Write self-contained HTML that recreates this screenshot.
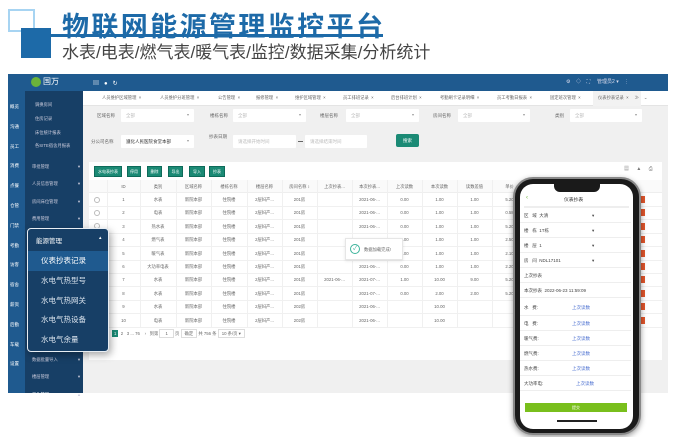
<!DOCTYPE html>
<html><head><meta charset="utf-8">
<style>
*{margin:0;padding:0;box-sizing:border-box}
body{width:681px;height:437px;background:#fff;position:relative;overflow:hidden;font-family:"Liberation Sans","Noto Sans CJK SC",sans-serif;color:#555}
.a{position:absolute;white-space:nowrap}
.t{font-size:4.5px;color:#666}
.inp{position:absolute;background:#fff;height:13px;font-size:4.5px;color:#bbb;padding:4px 5px;border-radius:1px}
.inp i{position:absolute;right:5px;top:3px;font-style:normal;color:#999;font-size:4px}
.btn{position:absolute;top:166px;height:11px;background:#1b8a75;border:1px solid #0e6b5a;color:#fff;font-size:4px;text-align:center;line-height:9px}
.pm{position:absolute;left:0;width:82px;height:19.5px;line-height:19.5px;padding-left:13px;color:#dbe4ee;font-size:7.5px}
.ph{font-size:4.5px;color:#444;position:absolute;left:0;width:111px;height:15px;border-bottom:1.5px solid #eee;padding:5px 4px}
.tab{position:absolute;top:95px;font-size:4.3px;color:#666}
</style></head><body>
<!-- logo -->
<div class="a" style="left:8px;top:9px;width:27px;height:23px;border:2.5px solid #a7d4f2"></div>
<div class="a" style="left:21px;top:28px;width:30px;height:30px;background:#1d6aa8"></div>
<div class="a" style="left:62px;top:5px;font-size:27px;font-weight:bold;color:#1d6aa8;letter-spacing:2.4px">物联网能源管理监控平台</div>
<div class="a" style="left:50px;top:34px;width:333px;height:3px;background:#1d6aa8"></div>
<div class="a" style="left:62px;top:38px;font-size:17px;color:#444">水表/电表/燃气表/暖气表/监控/数据采集/分析统计</div>

<!-- app -->
<div class="a" style="left:8px;top:74px;width:660px;height:319px;background:#f0f0f0"></div>
<div class="a" style="left:8px;top:74px;width:660px;height:17px;background:#1f5a8f"></div>
<div class="a" style="left:31px;top:77px;width:10px;height:10px;border-radius:50%;background:#6bb33a"></div>
<div class="a" style="left:43px;top:76px;font-size:8px;color:#fff">国万</div>
<div class="a" style="left:93px;top:78px;font-size:6px;color:#fff">▤ &nbsp; ● &nbsp; ↻</div>
<div class="a" style="left:566px;top:78px;font-size:5px;color:#dde">⚙ &nbsp;&nbsp; ◇ &nbsp;&nbsp; ⛶ &nbsp;&nbsp;&nbsp; 管理员2 ▾ &nbsp;&nbsp; ⋮</div>
<div class="a" style="left:8px;top:91px;width:17px;height:302px;background:#1f5a8f"></div>
<div class="a" style="left:25px;top:91px;width:58px;height:302px;background:#173f66"></div>
<div class="a" style="left:10px;top:97px;font-size:4.5px;color:#fff;line-height:19.8px;white-space:normal;width:14px">概览<br>沟通<br>员工<br>消费<br>点餐<br>仓管<br>门禁<br>考勤<br>访客<br>宿舍<br>薪资<br>后勤<br>车载<br>设置</div>
<div class="a" style="left:35px;top:98px;font-size:4.3px;color:#ccd;line-height:13.8px">调换房间<br>住房记录<br>床位统计报表<br>各SITE宿舍月报表</div>
<div class="a" style="left:32px;top:158px;font-size:4.3px;color:#ccd;line-height:17.4px;width:48px">审批管理<span style="float:right">▾</span><br>人员信息管理<span style="float:right">▾</span><br>房间床位管理<span style="float:right">▾</span><br>费用管理<span style="float:right">▾</span></div>
<div class="a" style="left:32px;top:351px;font-size:4.3px;color:#ccd;line-height:17.4px;width:48px">数据批量导入<span style="float:right">▾</span><br>楼层管理<span style="float:right">▾</span><br><span style="color:#fff">卫生管理</span><span style="float:right">▴</span></div>

<!-- tabs -->
<div class="a" style="left:83px;top:91px;width:585px;height:15px;background:#fff;border-bottom:1px solid #e4e4e4"></div>
<div class="tab" style="left:102px">人员维护区域管理 &nbsp;×</div>
<div class="tab" style="left:160px">人员维护分班管理 &nbsp;×</div>
<div class="tab" style="left:218px">公告管理 &nbsp;×</div>
<div class="tab" style="left:256px">报修管理 &nbsp;×</div>
<div class="tab" style="left:295px">维护区域管理 &nbsp;×</div>
<div class="tab" style="left:343px">员工排班记录 &nbsp;×</div>
<div class="tab" style="left:391px">后台排班计划 &nbsp;×</div>
<div class="tab" style="left:440px">考勤刷卡记录明细 &nbsp;×</div>
<div class="tab" style="left:497px">员工考勤日报表 &nbsp;×</div>
<div class="tab" style="left:550px">固定班次管理 &nbsp;×</div>
<div class="a" style="left:593px;top:91px;width:48px;height:15px;background:#f2f2f2"></div>
<div class="tab" style="left:598px">仪表抄表记录 &nbsp;× &nbsp;&nbsp;&nbsp; ≫ &nbsp;&nbsp; ⌄</div>

<!-- filters -->
<div class="a t" style="left:97px;top:113px">区域名称</div><div class="inp" style="left:121px;top:109px;width:73px">全部<i>▾</i></div>
<div class="a t" style="left:210px;top:113px">楼栋名称</div><div class="inp" style="left:233px;top:109px;width:73px">全部<i>▾</i></div>
<div class="a t" style="left:320px;top:113px">楼层名称</div><div class="inp" style="left:346px;top:109px;width:73px">全部<i>▾</i></div>
<div class="a t" style="left:433px;top:113px">房间名称</div><div class="inp" style="left:458px;top:109px;width:72px">全部<i>▾</i></div>
<div class="a t" style="left:555px;top:113px">类别</div><div class="inp" style="left:570px;top:109px;width:72px">全部<i>▾</i></div>
<div class="a t" style="left:91px;top:139px">分公司名称</div><div class="inp" style="left:121px;top:135px;width:73px;color:#333">遵化人民医院食堂本部<i>▾</i></div>
<div class="a t" style="left:209px;top:134px">抄表日期</div>
<div class="inp" style="left:233px;top:135px;width:63px">请选择开始时间</div>
<div class="a" style="left:298px;top:141px;width:5px;height:1px;background:#666"></div>
<div class="inp" style="left:305px;top:135px;width:62px">请选择结束时间</div>
<div class="a" style="left:396px;top:134px;width:23px;height:13px;background:#1b8a75;border-radius:2px;color:#fff;font-size:4.5px;text-align:center;line-height:13px">搜索</div>

<!-- table panel -->
<div class="a" style="left:89px;top:162px;width:573px;height:198px;background:#fff"></div>
<div class="btn" style="left:94px;width:28px">水电表抄表</div>
<div class="btn" style="left:127px;width:14px">停用</div>
<div class="btn" style="left:147px;width:15px">删除</div>
<div class="btn" style="left:168px;width:15px">导出</div>
<div class="btn" style="left:189px;width:16px">导入</div>
<div class="btn" style="left:209px;width:16px">抄表</div>
<div class="a" style="left:624px;top:165px;font-size:5px;color:#777;letter-spacing:3px">▦ ▲ ⎙</div>
<div class="a" style="left:89px;top:180px;width:573px;height:13px;background:#fafafa;border-bottom:1px solid #eee"></div>
<div id="tb"></div>
<div class="a t" style="left:112px;top:331px;font-size:4.3px"><span style="background:#1b8a75;color:#fff;padding:1px 2px">1</span>&nbsp; 2 &nbsp; 3 ... 76 &nbsp;&nbsp; › &nbsp; 到第 <span style="border:1px solid #ddd;padding:1px 5px">1</span> 页 <span style="border:1px solid #ddd;padding:1px 3px">确定</span> 共 756 条 <span style="border:1px solid #ddd;padding:1px 3px">10 条/页 ▾</span></div>

<!-- toast -->
<div class="a" style="left:345px;top:238px;width:58px;height:22px;background:#fff;border:1px solid #e6e6e6;box-shadow:0 1px 3px rgba(0,0,0,.1)"></div>
<div class="a" style="left:350px;top:244px;width:10px;height:10px;border:1.2px solid #3bb39a;border-radius:50%;color:#3bb39a;font-size:6px;line-height:8px;text-align:center">✓</div>
<div class="a t" style="left:364px;top:247px;font-size:4.3px">数据加载完成!</div>

<!-- popup menu -->
<div class="a" style="left:27px;top:228px;width:82px;height:124px;background:#173f66;border:1.5px solid #e8eef4;border-radius:4px;box-shadow:2px 3px 8px rgba(0,0,0,.35);overflow:hidden">
<div class="a" style="left:8px;top:6px;font-size:6.5px;color:#fff">能源管理</div>
<div class="a" style="left:71px;top:6px;font-size:5px;color:#fff">▴</div>
<div class="pm" style="top:22px;background:#1f5a8f;color:#fff">仪表抄表记录</div>
<div class="pm" style="top:42px">水电气热型号</div>
<div class="pm" style="top:61.5px">水电气热网关</div>
<div class="pm" style="top:81px">水电气热设备</div>
<div class="pm" style="top:100.5px">水电气余量</div>
</div>

<!-- phone -->
<div class="a" style="left:513px;top:177px;width:128px;height:258px;border-radius:20px;background:#1a1a1a;border:2px solid #888;box-shadow:0 2px 6px rgba(0,0,0,.4)"></div>
<div class="a" style="left:520px;top:184px;width:113px;height:245px;border-radius:13px;background:#fff;overflow:hidden">
<div class="a" style="left:34px;top:0;width:46px;height:8px;background:#1a1a1a;border-radius:0 0 6px 6px"></div>
<div class="a" style="left:6px;top:11px;color:#6bb33a;font-size:6px">‹</div>
<div class="a" style="left:44px;top:12px;font-size:4.8px;color:#333">仪表抄表</div>
<div class="a" style="left:4px;top:22px;width:105px;height:1.5px;background:#eee"></div>
<div class="ph" style="top:24px">区 &nbsp; 域 &nbsp;大清<span style="position:absolute;left:72px">▾</span></div>
<div class="ph" style="top:39px">楼 &nbsp; 栋 &nbsp;1T栋<span style="position:absolute;left:72px">▾</span></div>
<div class="ph" style="top:54px">楼 &nbsp; 层 &nbsp;1<span style="position:absolute;left:72px">▾</span></div>
<div class="ph" style="top:69px">房 &nbsp; 间 &nbsp;NDL17101<span style="position:absolute;left:72px">▾</span></div>
<div class="ph" style="top:84px">上次抄表</div>
<div class="ph" style="top:99px">本次抄表 &nbsp;2022-06-23 11:59:09</div>
<div class="ph" style="top:116px;height:16px">水 &nbsp; 费: <span style="position:absolute;left:52px;color:#4a6fd0">上次读数</span></div>
<div class="ph" style="top:132px">电 &nbsp; 费: <span style="position:absolute;left:52px;color:#4a6fd0">上次读数</span></div>
<div class="ph" style="top:147px">暖气费: <span style="position:absolute;left:52px;color:#4a6fd0">上次读数</span></div>
<div class="ph" style="top:162px">燃气费: <span style="position:absolute;left:52px;color:#4a6fd0">上次读数</span></div>
<div class="ph" style="top:177px">热水费: <span style="position:absolute;left:52px;color:#4a6fd0">上次读数</span></div>
<div class="ph" style="top:192px">大功率电: <span style="position:absolute;left:56px;color:#4a6fd0">上次读数</span></div>
<div class="a" style="left:5px;top:219px;width:102px;height:9px;background:#79bf1c;color:#fff;font-size:4px;text-align:center;line-height:9px">提交</div>
<div class="a" style="left:37px;top:236px;width:40px;height:1.5px;background:#222"></div>
</div>

<script>
var cols=[89,107,140,176,211,247,282,317,352,387,422,457,492,527];
var hd=["","ID","类别","区域名称","楼栋名称","楼层名称","房间名称 ↕","上次抄表...","本次抄表...","上次读数","本次读数","读数差值","单价"];
var tp=["水表","电表","热水表","燃气表","暖气表","大功率电表","水表","水表","水表","电表"];
var up=["0.00","0.00","0.00","0.00","0.00","0.00","1.00","0.00","",""];
var cu=["1.00","1.00","1.00","1.00","1.00","1.00","10.00","2.00","10.00","10.00"];
var df=["1.00","1.00","1.00","1.00","1.00","1.00","9.00","2.00","",""];
var pr=["5.20","0.58","5.20","2.50","2.10","2.20","5.20","5.20","",""];
var h="";
function cell(x,w,y,s){return '<div class="a t" style="left:'+x+'px;top:'+y+'px;width:'+w+'px;text-align:center;font-size:4.3px">'+s+'</div>';}
for(var c=0;c<13;c++){h+=cell(cols[c],cols[c+1]-cols[c],184,hd[c]);}
for(var r=0;r<10;r++){
 var y=193+r*13.4;
 h+='<div class="a" style="left:89px;top:'+(y+13)+'px;width:573px;height:1px;background:#f0f0f0"></div>';
 if(r<3)h+='<div class="a" style="left:94px;top:'+(y+3.5)+'px;width:6px;height:6px;border:1px solid #bbb;border-radius:50%"></div>';
 var vals=["",String(r+1),tp[r],"新院本部","住院楼","2层妇产...",r<8?"201房":"202房",r==6?"2021-06-...":"",(r==6||r==7)?"2021-07-...":"2021-06-...",up[r],cu[r],df[r],pr[r]];
 for(var c=1;c<13;c++)h+=cell(cols[c],cols[c+1]-cols[c],y+4,vals[c]);
 h+='<div class="a" style="left:640px;top:'+(y+3)+'px;width:5px;height:7px;background:#e0552b"></div>';
}
for(var c=1;c<13;c++)h+='<div class="a" style="left:'+cols[c]+'px;top:180px;width:1px;height:147px;background:#f0f0f0"></div>';
document.getElementById("tb").innerHTML=h;
</script>
</body></html>
